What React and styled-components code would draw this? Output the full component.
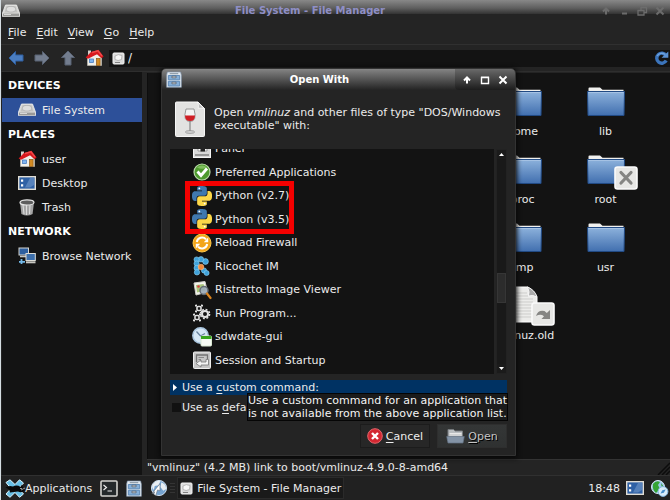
import React from "react";
import styled, { createGlobalStyle, css } from "styled-components";

const GlobalStyle = createGlobalStyle`
  *, *::before, *::after { box-sizing: border-box; }
  body { margin: 0; background: #131313; }
  body, button, input {
    font-family: "DejaVu Sans", Verdana, sans-serif;
    font-size: 11px;
    line-height: 13px;
    color: #ebebeb;
  }
  button { background: none; border: 0; padding: 0; margin: 0; text-align: left; white-space: nowrap; }
  ul { list-style: none; margin: 0; padding: 0; }
  h1, h2, p { margin: 0; font-size: 11px; }
  svg { display: block; flex: none; }
  u { text-underline-offset: 2px; }
`;

const Desktop = styled.div`
  position: relative;
  display: flex;
  flex-direction: column;
  min-height: 100vh;
  overflow: hidden;
  border-left: 1px solid #d5dde2;
  background: #242424;
`;

const TitleBar = styled.header`
  display: flex;
  align-items: center;
  flex: none;
  height: 21px;
  padding: 0 4px 0 1px;
  background: linear-gradient(#888, #5f5f5f 8px, #333 14px, #242424 14px);
`;

const WindowTitle = styled.h1`
  flex: 1;
  text-align: center;
  font-size: 10px;
  font-weight: bold;
  color: #8f8fc6;
`;

const WindowButtons = styled.div`
  display: flex;
  align-items: center;
  gap: 6px;
  color: ${(p) => (p.$active ? "#fff" : "#6c6c6c")};
  button { color: inherit; }
  ${(p) =>
    p.$active &&
    css`
      align-self: stretch;
      padding: 0 6px;
      background: rgba(0, 0, 0, 0.2);
      border-radius: 0 0 0 4px;
    `}
`;

const MenuBar = styled.nav`
  display: flex;
  align-items: center;
  gap: 10px;
  height: 24px;
  padding: 0 7px;
  border-bottom: 1px solid #303030;
`;

const ToolBar = styled.div`
  display: flex;
  align-items: center;
  gap: 8px;
  height: 27px;
  padding-left: 6px;
  border-bottom: 1px solid #2e2e2e;
`;

const PathBox = styled.label`
  display: flex;
  flex: 1;
  align-items: center;
  gap: 3px;
  height: 17px;
  padding: 0 1px 0 3px;
  margin-left: -3px;
  background: #131313;
  input { flex: 1; min-width: 0; border: 0; padding: 0; background: none; outline: 0; font-size: 12px; }
`;

const Body = styled.div`
  display: flex;
  flex: 1;
`;

const SideBar = styled.aside`
  width: 140px;
  padding-top: 1px;
  margin-left: 1px;
  background: #131313;
`;

const SideHeading = styled.h2`
  height: 25px;
  padding: 6px 6px 0;
  color: #fff;
`;

const SideItem = styled.button`
  display: flex;
  align-items: center;
  gap: 6px;
  width: 100%;
  height: 24px;
  padding-left: 16px;
  background: ${(p) => (p.$selected ? "#2d5099" : "none")};
`;

const MainPane = styled.main`
  display: flex;
  flex-direction: column;
  flex: 1;
  margin-left: 5px;
`;

const FileArea = styled.div`
  flex: 1;
  margin-top: 1px;
  padding: 9px 23px 0 0;
  background: #131313;
  border-left: 1px solid #0d0d0d;
`;

const FileGrid = styled.ul`
  display: grid;
  grid-template-columns: repeat(2, 83px);
  grid-auto-rows: 68px;
  justify-content: end;
`;

const FileItem = styled.li`
  display: flex;
  flex-direction: column;
  align-items: center;
`;

const FileIcon = styled.div`
  position: relative;
  height: 43px;
  padding-top: ${(p) => (p.$tall ? "0" : "4px")};
`;

const Emblem = styled.span`
  position: absolute;
  left: ${(p) => (p.$near ? "24px" : "28px")};
  top: 16px;
`;

const StatusBar = styled.footer`
  display: flex;
  justify-content: space-between;
  align-items: center;
  height: 16px;
  border-top: 1px solid #333;
  svg { align-self: flex-end; }
`;

const Panel = styled.footer`
  display: flex;
  align-items: center;
  height: 25px;
  padding: 0 1px 0 4px;
  gap: 2px;
  border-top: 1px solid #303030;
  background: #212121;
`;

const PanelGroup = styled.div`
  display: flex;
  align-items: center;
  gap: ${(p) => (p.$tray ? "6px" : "8px")};
  margin-left: ${(p) => (p.$tray ? "auto" : "0")};
`;

const PanelButton = styled.button`
  display: flex;
  align-items: center;
`;

const TaskButton = styled(PanelButton)`
  gap: 4px;
  height: 22px;
  padding: 0 2px;
  background: #1a1a1a;
  border: 1px solid #2a2a2a;
`;

const Dialog = styled.section`
  position: absolute;
  left: 160px;
  top: 68px;
  width: 355px;
  border: 1px solid #333;
  border-radius: 5px 5px 0 0;
  background: #242424;
  box-shadow: 0 1px 5px 1px #080808;
`;

const DialogBar = styled.header`
  display: flex;
  align-items: center;
  height: 21px;
  padding-left: 4px;
  border-radius: 4px 4px 0 0;
  background: linear-gradient(#848484, #4a4a4a 60%, #242424);
`;

const DialogTitle = styled.h1`
  flex: 1;
  padding-left: 2px;
  text-align: center;
  font-size: 10px;
  color: #fff;
`;

const DialogContent = styled.div`
  padding: 9px 8px 7px;
`;

const Intro = styled.div`
  display: flex;
  align-items: center;
  gap: 8px;
  height: 40px;
  padding-left: 4px;
`;

const ListFrame = styled.div`
  display: flex;
  gap: 2px;
  height: 225px;
  margin-top: 10px;
`;

const AppList = styled.ul`
  position: relative;
  display: flex;
  flex: 1;
  flex-direction: column;
  justify-content: flex-end;
  padding-bottom: 2px;
  overflow: hidden;
  background: #131313;
`;

const AppRows = styled.div`
  display: grid;
  grid-auto-rows: 1fr;
  flex: none;
  height: 235px;
`;

const AppRow = styled.li`
  display: flex;
  align-items: center;
  button { display: flex; align-items: center; gap: 3px; padding-left: 22px; }
`;

const Highlight = styled.div`
  position: absolute;
  left: 15px;
  top: 32px;
  width: 109px;
  height: 53px;
  border: 5px solid #f40000;
`;

const ScrollBar = styled.div`
  display: flex;
  flex-direction: column;
  align-items: center;
  width: 11px;
  background: #191919;
  border: 1px solid #222;
`;

const ScrollArrow = styled.button`
  display: grid;
  place-items: center;
  width: 9px;
  height: 9px;
  background: #1b1b1b;
`;

const ScrollTrack = styled.div`
  display: flex;
  flex: 1;
  align-self: stretch;
  flex-direction: column;
  padding-top: 114px;
`;

const ScrollThumb = styled.div`
  height: 30px;
  background: #2c2c2c;
  border: 1px solid #363636;
`;

const CustomCommand = styled.button`
  display: flex;
  align-items: center;
  gap: 2px;
  width: 100%;
  height: 15px;
  margin-top: 6px;
  padding-left: 3px;
  background: #003263;
`;

const DefaultOption = styled.label`
  display: flex;
  align-items: center;
  gap: 1px;
  height: 25px;
  padding-left: 2px;
  white-space: nowrap;
  input { appearance: none; width: 9px; height: 9px; margin: 0; background: #111; }
`;

const Tooltip = styled.div`
  position: absolute;
  left: 85px;
  top: 324px;
  width: max-content;
  border: 1px solid #050505;
  background: #1b1b1b;
  color: #f4f4f4;
  white-space: nowrap;
`;

const Actions = styled.div`
  display: flex;
  justify-content: flex-end;
  gap: 7px;
  margin-top: 4px;
`;

const ActionButton = styled.button`
  display: flex;
  align-items: center;
  justify-content: center;
  gap: 3px;
  width: 70px;
  height: 24px;
  border: 1px solid ${(p) => (p.disabled ? "#2e2e2e" : "#1c1c1c")};
  background: ${(p) => (p.disabled ? "linear-gradient(#343636, #2f3131)" : "#272727")};
  color: ${(p) => (p.disabled ? "#c4c4c4" : "#eee")};
  text-shadow: ${(p) => (p.disabled ? "1px 1px 0 #000" : "none")};
`;

const IconSlot = styled.span`
  display: grid;
  place-items: center;
  width: 18px;
`;

const controlShapes = {
  up: <path d="M6 9.5V4M3 6.5L6 3.5L9 6.5" />,
  min: <path d="M4 8.5H9" />,
  max: <path d="M2.5 3.5H9.500V9.500H2.500ZM2 3.200H10" strokeWidth="1.400" />,
  restore: <path d="M2 5.5H8V10H2ZM5 5V2.5H10.5V7.5H8" strokeWidth="1.3" />,
  close: <path d="M2.5 2.5L9.5 9.5M9.5 2.5L2.5 9.5" />,
};

const WinButton = ({ kind, label }) => (
  <button aria-label={label}>
    <svg width="12" height="12" viewBox="0 0 12 12" fill="none" stroke="currentColor" strokeWidth="2">
      {controlShapes[kind]}
    </svg>
  </button>
);

const Drive = () => (
  <svg width="18" height="14" viewBox="0 0 18 14">
    <path d="M3.5 1H14.5L17.5 9V12.5H.5V9Z" fill="#d8d8d6" stroke="#eee" strokeWidth=".8" />
    <path d="M4.5 2H13.5L15.5 8.5H2.5Z" fill="#c3c3c1" />
    <ellipse cx="9" cy="5.2" rx="4.6" ry="2.8" fill="#dedede" stroke="#aaa" strokeWidth=".6" />
    <path d="M1 9.6H17V12.4H1Z" fill="#9a9a98" />
    <path d="M2 10.5H9" stroke="#e8e8e8" strokeWidth=".8" />
  </svg>
);

const DriveFlat = () => (
  <svg width="13" height="13" viewBox="0 0 13 13">
    <rect x="1" y="1" width="11" height="11" rx="1" fill="#dadada" stroke="#f2f2f2" />
    <path d="M3 4Q6 1.5 10 3.5L9.500 7.500Q6 9.500 3 7.500Z" fill="#f6f6f6" stroke="#a8a8a8" strokeWidth=".8" />
    <path d="M3 10.500H8" stroke="#777" strokeWidth=".9" />
  </svg>
);

const Arrow = ({ kind }) => {
  const turn = { left: 0, right: 180, up: 90 }[kind];
  return (
    <svg width="18" height="18" viewBox="0 0 18 18">
      <path
        d="M2 9L8.5 2.5V6H16V12H8.5V15.5Z"
        transform={`rotate(${turn} 9 9)`}
        fill={kind === "left" ? "#4a7dc0" : "#737d8e"}
        stroke={kind === "left" ? "#2f5f9f" : "#596373"}
      />
    </svg>
  );
};

const Home = () => (
  <svg width="19" height="18" viewBox="0 0 19 18">
    <path d="M2.500 9L6 5L13 5L16.500 9V16.500H2.500Z" fill="#f1efe8" stroke="#c6c2b8" strokeWidth=".6" />
    <path d="M3 1.500H6V6H3Z" fill="#d6d2cc" />
    <path d="M.6 8.500L6 3L13.500 .8L18.600 7.500L16.500 9.300L12 5.300L3 9.800Z" fill="#d8181d" />
    <path d="M7 3.500L13 1.800L17 7" fill="none" stroke="#f04a4a" strokeWidth="1.400" />
    <rect x="4.500" y="10" width="4" height="3.600" fill="#7fb4ef" stroke="#3c73bb" strokeWidth=".7" />
    <rect x="11.500" y="9.500" width="3.600" height="7" fill="#d28a22" stroke="#8a5410" strokeWidth=".7" />
  </svg>
);

const Reload = () => (
  <svg width="15" height="15" viewBox="0 0 15 15">
    <path d="M12 4.5A5 5 0 1 0 12.2 9.5" fill="none" stroke="#3b74bb" strokeWidth="3.4" />
    <path d="M7.5 6.8H14.3V.5Z" fill="#5b92d4" />
    <path d="M11 3.6A5 5 0 0 0 3.2 5" fill="none" stroke="#6fa4e0" strokeWidth="1.4" />
  </svg>
);

const DesktopIcon = () => (
  <svg width="18" height="14" viewBox="0 0 18 14">
    <rect x=".7" y=".7" width="16.6" height="12.6" fill="#2f61a5" stroke="#e0ddd4" strokeWidth="1.4" />
    <path d="M7 11.5L12 2H16V9L12 11.5Z" fill="#6890c4" opacity=".7" />
    <path d="M3 3.6H5.200V5.800H3ZM3 8.200H5.200V10.400H3Z" fill="#fff" />
  </svg>
);

const TrashIcon = () => (
  <svg width="18" height="17" viewBox="0 0 18 17">
    <path d="M2 3L3.4 15Q9 18 14.6 15L16 3Z" fill="#a3a3a3" />
    <path d="M5 6L6 15M8.5 6V16M12 6L11.5 15" stroke="#dcdcdc" strokeWidth="1.1" />
    <ellipse cx="9" cy="3.4" rx="7" ry="2.6" fill="#5d5d5d" stroke="#e4e4e4" strokeWidth="1.2" />
  </svg>
);

const NetworkIcon = () => (
  <svg width="18" height="18" viewBox="0 0 18 18">
    <rect x="1" y="1" width="9.5" height="7" fill="#2d5f9f" stroke="#d4d4cf" />
    <path d="M2 9.5H10" stroke="#c7c7c2" strokeWidth="1.6" />
    <rect x="8" y="6.5" width="9.3" height="7" fill="#3d6fab" stroke="#deded8" />
    <path d="M8 15.3H17.5" stroke="#c7c7c2" strokeWidth="2" />
    <path d="M3.5 12V17M1 14.8H7" stroke="#74b9e8" strokeWidth="1.8" fill="none" />
  </svg>
);

const Folder = () => (
  <svg width="40" height="32" viewBox="0 0 40 32">
    <defs>
      <linearGradient id="folderFront" x2="0" y2="1">
        <stop stopColor="#8db2dc" />
        <stop offset="1" stopColor="#416faf" />
      </linearGradient>
    </defs>
    <path d="M2.5 8V2.5Q2.5 1.5 3.5 1.5H14L16.5 3.8H37.5V8Z" fill="#f0f0ee" />
    <path d="M1.5 5.5H38.5L38 29.5H2Z" fill="url(#folderFront)" stroke="#214a84" />
    <path d="M2.5 6.5H37.5" stroke="#a5c2e4" />
  </svg>
);

const FilePage = () => (
  <svg width="31" height="38" viewBox="0 0 31 38">
    <path d="M1 1H21Q25 3 30 11V36H1Z" fill="#ececea" stroke="#fff" />
    <path d="M3 7H20M3 10H21M3 13H26M3 16H26M3 19H26M3 22H26M3 25H26M3 28H26M3 31H26" stroke="#cdcdcb" />
    <path d="M20.5 1Q23 6 21.5 10Q26 8.5 30 11Q28 4 20.5 1Z" fill="#aaa" stroke="#f7f7f7" />
  </svg>
);

const EmblemIcon = ({ kind }) => (
  <svg width="24" height="24" viewBox="0 0 24 24">
    <rect x="1" y="1" width="22" height="22" rx="2.5" fill="#e7e7e5" stroke="#fafafa" strokeWidth="1.6" />
    {kind === "denied" ? (
      <path d="M7 6.5L17 17M17 6.5L7 17" stroke="#858583" strokeWidth="3.2" strokeLinecap="round" />
    ) : (
      <path d="M5 14Q7 7.5 13.5 9L15.8 11L19 8V17H10.5L13 14.2Q9.5 11.5 5 14Z" fill="#858583" />
    )}
  </svg>
);

const Cabinet = () => (
  <svg width="16" height="17" viewBox="0 0 17 17" preserveAspectRatio="none">
    <path d="M1.5 1H15.5L16.3 4V16.3H.7V4Z" fill="#e3eaf1" stroke="#8296ac" strokeWidth=".7" />
    <path d="M2.5 4.5H14.5V8.8H2.5ZM2.5 10.3H14.5V15H2.5Z" fill="#86afd8" stroke="#5e89b7" />
    <path d="M6.3 5.2H10.7V6.8H6.3ZM6.3 11.2H10.7V12.8H6.3Z" fill="#f4f4f4" stroke="#454d56" strokeWidth=".7" />
    <path d="M4 2.7H13" stroke="#7d8b99" />
  </svg>
);

const WineFile = () => (
  <svg width="32" height="37" viewBox="0 0 32 37">
    <path d="M1.5 2Q1.500 1 2.500 1H24L30.5 7.5V34.500Q30.500 35.500 29.500 35.500H2.500Q1.500 35.500 1.500 34.500Z" fill="#e2e2e1" stroke="#f6f6f6" />
    <path d="M23.5 1Q25 4 24.3 7.3Q28 6.5 30.5 8Z" fill="#bcbcbc" stroke="#fff" strokeWidth=".7" />
    <path d="M12 8H20Q23.5 20.5 16 20.5Q8.5 20.5 12 8Z" fill="#f2f2f2" stroke="#8d8d8d" strokeWidth=".9" />
    <path d="M11 14.5H21Q21 20 16 20Q11 20 11 14.5Z" fill="#cf1d24" />
    <path d="M16 20V30" stroke="#8d8d8d" strokeWidth="1.3" />
    <ellipse cx="16" cy="31" rx="4.6" ry="1.3" fill="#ddd" stroke="#888" strokeWidth=".8" />
  </svg>
);

const snake =
  "M14.25.18l.9.2.73.26.59.3.45.32.34.34.25.34.16.33.1.3.04.26.02.2-.01.13V8.5l-.05.63-.13.55-.21.46-.26.38-.3.31-.33.25-.35.19-.35.14-.33.1-.3.07-.26.04-.21.02H8.77l-.69.05-.59.14-.5.22-.41.27-.33.32-.27.35-.2.36-.15.37-.1.35-.07.32-.04.27-.02.21v3.06H3.17l-.21-.03-.28-.07-.32-.12-.35-.18-.36-.26-.36-.36-.35-.46-.32-.59-.28-.73-.21-.88-.14-1.05-.05-1.23.06-1.22.16-1.04.24-.87.32-.71.36-.57.4-.44.42-.33.42-.24.4-.16.36-.1.32-.05.24-.01h.16l.06.01h8.16v-.83H6.18l-.01-2.75-.02-.37.05-.34.11-.31.17-.28.25-.26.31-.23.38-.2.44-.18.51-.15.58-.12.64-.1.71-.06.77-.04.84-.02 1.27.05z";

const appDrawings = {
  panel: (
    <>
      <rect x="1.5" y="1.5" width="17" height="17" fill="#d9d9d9" stroke="#f5f5f5" />
      <path d="M6 3H15V12H6Z" fill="#fff" stroke="#999" />
      <path d="M8.500 9H13V12.500H8.500Z" fill="#222" />
      <path d="M3 16H17" stroke="#999" strokeWidth="2" />
    </>
  ),
  preferred: (
    <>
      <circle cx="10" cy="10" r="8" fill="#4e9a2e" stroke="#b9d8a8" strokeWidth="1.2" />
      <path d="M5 5.5A7 7 0 0 1 15 5.5Q10 8 5 5.5Z" fill="#7fbd5e" />
      <path d="M5.5 9.5L9 13.5L15 6.5" fill="none" stroke="#fff" strokeWidth="2.8" />
    </>
  ),
  python: (
    <g transform="scale(.8333)">
      <path d={snake} fill="#3f78ae" />
      <path d={snake} fill="#fcd748" transform="rotate(180 12 12)" />
      <circle cx="8.8" cy="2.9" r="1.1" fill="#fff" />
      <circle cx="15.2" cy="21.1" r="1.1" fill="#fff" />
    </g>
  ),
  reload: (
    <>
      <circle cx="10" cy="10" r="9" fill="#f3a519" stroke="#ffc94a" />
      <path d="M4.8 9A5.3 5.3 0 0 1 14 6.300M15.2 11A5.3 5.3 0 0 1 6 13.7" fill="none" stroke="#fff" strokeWidth="2" />
      <path d="M16.2 4.500V9.3H11.800ZM3.8 15.500V10.7H8.200Z" fill="#fff" />
    </>
  ),
  ricochet: (
    <>
      <g fill="#3fa2da" stroke="#8fd4f4" strokeWidth=".6">
        <circle cx="13.500" cy="5.500" r="2.900" />
        <circle cx="9" cy="3.300" r="2.700" />
        <circle cx="4.600" cy="3.500" r="2.600" />
        <circle cx="4.600" cy="7.500" r="2.600" />
        <circle cx="4.600" cy="12" r="2.600" />
        <circle cx="5" cy="16.300" r="2.700" />
        <circle cx="12" cy="14.500" r="2.600" />
        <circle cx="14.600" cy="17" r="2.500" />
      </g>
      <circle cx="9" cy="11" r="2.800" fill="#f18a3c" stroke="#ffc08a" strokeWidth=".6" />
    </>
  ),
  ristretto: (
    <>
      <path d="M2 3L13 1.5L15.5 12L4 15Z" fill="#f4f4ee" stroke="#d0d0c8" />
      <path d="M4 5L11.5 4L13.5 10.5L5 12.5Z" fill="#a7c47b" />
      <circle cx="6.500" cy="6.500" r="1.3" fill="#d84040" />
      <circle cx="12" cy="10.5" r="4" fill="#9aa9b8" fillOpacity=".9" stroke="#646c74" strokeWidth="1.5" />
      <path d="M15 13.5L18.5 18" stroke="#d9831e" strokeWidth="2.2" strokeLinecap="round" />
    </>
  ),
  run: (
    <g fill="none" stroke="#e2e2e2">
      <rect x="5" y="3.500" width="4" height="4" rx="1" strokeWidth="1.600" />
      <path d="M4.200 1.500V3.500M9.800 1.500V3.500M4.200 7.500V9.500M9.800 7.500V9.500M3 2.800H5M9 2.800H11M3 8.200H5M9 8.200H11" strokeWidth="1.400" />
      <rect x="3" y="12.500" width="4" height="4" rx="1" strokeWidth="1.600" />
      <path d="M2.200 10.500V12.500M7.800 10.500V12.500M2.200 16.500V18.500M7.800 16.500V18.500M1 11.800H3M7 11.800H9M1 17.200H3M7 17.200H9" strokeWidth="1.400" />
      <circle cx="13" cy="11" r="3" strokeWidth="2" />
      <circle cx="13" cy="11" r="4.600" strokeWidth="1.5" strokeDasharray="1.9 1.713" />
    </g>
  ),
  sdwdate: (
    <>
      <circle cx="8.5" cy="8.5" r="7.7" fill="#d5e7f5" stroke="#a9c5de" strokeWidth="1.5" />
      <path d="M4.5 4.5L8.5 9L13 6.5" fill="none" stroke="#67809c" strokeWidth="1.3" />
      <rect x="9" y="9" width="10.5" height="10" rx="1" fill="#f6faf3" stroke="#d9e8d1" />
      <path d="M9 9H19.5V12H9Z" fill="#37a61d" />
    </>
  ),
  session: (
    <>
      <rect x="1.5" y="2" width="17" height="16.5" rx="1" fill="#c6c6c6" stroke="#eee" />
      <path d="M4.500 12V5H15.500V9" fill="none" stroke="#737373" strokeWidth="1.300" />
      <path d="M6.500 7.500H12M6.500 9.500H9" stroke="#8a8a8a" />
      <path d="M4 13.500L9 10V12H14V9.500H16.500V15H9V17Z" fill="#f4f4f4" stroke="#777" strokeWidth=".8" />
    </>
  ),
};

const AppIcon = ({ name }) => (
  <svg width="20" height="20" viewBox="0 0 20 20">{appDrawings[name]}</svg>
);

const CancelIcon = () => (
  <svg width="16" height="16" viewBox="0 0 16 16">
    <circle cx="8" cy="8" r="7.3" fill="#d32731" stroke="#e4666c" />
    <path d="M5 5L11 11M11 5L5 11" stroke="#fff" strokeWidth="2.4" />
  </svg>
);

const OpenIcon = () => (
  <svg width="19" height="16" viewBox="0 0 19 16">
    <path d="M2 13V1.5H7.5L9 3H16.5V13Z" fill="#b9bdc0" stroke="#777b7e" />
    <path d="M3.5 5.5H15.5M3.5 7H15.5" stroke="#e8e8e8" />
    <path d="M.7 8.5H18.3L17 15H2Z" fill="#8393a6" stroke="#647284" strokeWidth=".7" />
  </svg>
);

const XfceMouse = () => (
  <svg width="20" height="19" viewBox="0 0 20 19">
    <path d="M1 3.5L5 .8L10 5.5L14.5 .8L18.5 4L13.5 9.5L18.5 15L14.5 18.3L10 13.5L5 18.3L1 15L6 9.5Z" fill="#67bfe6" stroke="#d9f3fc" />
    <path d="M.5 8.5Q4 6 8 7.5Q12 5.5 15.5 8L17 5.5L18 9L20 12Q16 14 13 12.5L5 13.5Q5 10 .5 8.5Z" fill="#080808" />
    <path d="M15 9.5H17M16 11L20 9" stroke="#bbb" strokeWidth=".8" />
  </svg>
);

const Terminal = () => (
  <svg width="18" height="17" viewBox="0 0 18 17">
    <rect x="1" y="1" width="16" height="15" rx="1" fill="#252a2c" stroke="#d3d3cf" strokeWidth="1.6" />
    <path d="M3.5 5L6.5 7.5L3.5 10M7.5 11H12" fill="none" stroke="#eee" strokeWidth="1.2" />
  </svg>
);

const Globe = () => (
  <svg width="18" height="18" viewBox="0 0 19 18">
    <circle cx="9.5" cy="9" r="8" fill="#75a3d0" stroke="#d3e1ef" />
    <path d="M3 5Q7 0 11 2L9 6L5 7L4 11Q1 8 3 5ZM12 3Q17 5 17 10L14 12L11 8Z" fill="#e9eef2" />
    <path d="M2 15L10.5 4.5V12L8 11L6 17L4 15.5L5 13Z" fill="#fff" stroke="#5d6975" strokeWidth=".6" />
  </svg>
);

const TorTray = () => (
  <svg width="19" height="17" viewBox="0 0 19 17">
    <circle cx="8" cy="7" r="6.5" fill="#9dc8ec" stroke="#d9ebf8" />
    <path d="M3 4Q6 0 10 2L8 5L10 9L6 13Q2 10 3 4Z" fill="#35a435" />
    <path d="M11 3L14 7L12 9Z" fill="#35a435" />
    <circle cx="13" cy="11.5" r="4.9" fill="#d9ecfa" stroke="#84b7df" />
    <path d="M10.5 13.5L12.3 10.3L15.7 9.5L13.8 12.8Z" fill="#468ecb" />
  </svg>
);

const Grip = () => (
  <svg width="13" height="13" viewBox="0 0 13 13">
    <path d="M1 13L13 1M5 13L13 5M9 13L13 9" stroke="#0c0c0c" strokeWidth="1.5" />
  </svg>
);

const Handle = () => (
  <svg width="5" height="12" viewBox="0 0 5 12">
    <path d="M0 1.5H5M0 4.5H5M0 7.5H5M0 10.5H5" stroke="#343434" />
  </svg>
);

const Tri = ({ d }) => (
  <svg width="7" height="9" viewBox="0 0 7 9"><path d={d} fill="#fff" /></svg>
);

const menus = ["File", "Edit", "View", "Go", "Help"];

const sideGroups = [
  { title: "DEVICES", items: [{ label: "File System", icon: <Drive />, selected: true }] },
  {
    title: "PLACES",
    items: [
      { label: "user", icon: <Home /> },
      { label: "Desktop", icon: <DesktopIcon /> },
      { label: "Trash", icon: <TrashIcon /> },
    ],
  },
  { title: "NETWORK", items: [{ label: "Browse Network", icon: <NetworkIcon /> }] },
];

const files = [
  { name: "home" },
  { name: "lib" },
  { name: "proc" },
  { name: "root", emblem: "denied" },
  { name: "tmp" },
  { name: "usr" },
  { name: "vmlinuz.old", page: true, emblem: "link" },
];

const apps = [
  ["Panel", "panel"],
  ["Preferred Applications", "preferred"],
  ["Python (v2.7)", "python"],
  ["Python (v3.5)", "python"],
  ["Reload Firewall", "reload"],
  ["Ricochet IM", "ricochet"],
  ["Ristretto Image Viewer", "ristretto"],
  ["Run Program...", "run"],
  ["sdwdate-gui", "sdwdate"],
  ["Session and Startup", "session"],
];

function OpenWithDialog() {
  return (
    <Dialog role="dialog" aria-labelledby="open-with-title">
      <DialogBar>
        <Cabinet />
        <DialogTitle id="open-with-title">Open With</DialogTitle>
        <WindowButtons $active>
          <WinButton kind="up" label="Shade" />
          <WinButton kind="max" label="Maximize" />
          <WinButton kind="close" label="Close" />
        </WindowButtons>
      </DialogBar>
      <DialogContent>
        <Intro>
          <WineFile />
          <p>
            Open <i>vmlinuz</i> and other files of type "DOS/Windows executable" with:
          </p>
        </Intro>
        <ListFrame>
          <AppList>
            <AppRows>
              {apps.map(([label, icon]) => (
                <AppRow key={label}>
                  <button><AppIcon name={icon} />{label}</button>
                </AppRow>
              ))}
            </AppRows>
            <Highlight />
          </AppList>
          <ScrollBar>
            <ScrollArrow aria-label="Scroll up"><Tri d="M1 6H6L3.5 3Z" /></ScrollArrow>
            <ScrollTrack><ScrollThumb /></ScrollTrack>
            <ScrollArrow aria-label="Scroll down"><Tri d="M1 3H6L3.5 6Z" /></ScrollArrow>
          </ScrollBar>
        </ListFrame>
        <CustomCommand>
          <Tri d="M0 1V8L4 4.5Z" />
          <span>Use a <u>c</u>ustom command:</span>
        </CustomCommand>
        <DefaultOption>
          <input type="checkbox" />
          <span>Use as <u>d</u>efault for this kind of file</span>
        </DefaultOption>
        <Actions>
          <ActionButton><CancelIcon /><span><u>C</u>ancel</span></ActionButton>
          <ActionButton disabled><OpenIcon /><span><u>O</u>pen</span></ActionButton>
        </Actions>
      </DialogContent>
      <Tooltip role="tooltip">
        Use a custom command for an application that<br />is not available from the above application list.
      </Tooltip>
    </Dialog>
  );
}

export default function App() {
  return (
    <>
      <GlobalStyle />
      <Desktop>
        <TitleBar>
          <Drive />
          <WindowTitle>File System - File Manager</WindowTitle>
          <WindowButtons>
            <WinButton kind="up" label="Shade" />
            <WinButton kind="min" label="Minimize" />
            <WinButton kind="restore" label="Restore" />
            <WinButton kind="close" label="Close" />
          </WindowButtons>
        </TitleBar>
        <MenuBar>
          {menus.map((m) => (
            <button key={m}><u>{m[0]}</u>{m.slice(1)}</button>
          ))}
        </MenuBar>
        <ToolBar>
          <button aria-label="Back"><Arrow kind="left" /></button>
          <button aria-label="Forward"><Arrow kind="right" /></button>
          <button aria-label="Up"><Arrow kind="up" /></button>
          <button aria-label="Home"><Home /></button>
          <PathBox>
            <DriveFlat />
            <input type="text" aria-label="Location" defaultValue="/" />
            <button aria-label="Reload"><Reload /></button>
          </PathBox>
        </ToolBar>
        <Body>
          <SideBar>
            {sideGroups.map((g) => (
              <div key={g.title}>
                <SideHeading>{g.title}</SideHeading>
                {g.items.map((i) => (
                  <SideItem key={i.label} $selected={i.selected}>
                    <IconSlot>{i.icon}</IconSlot>
                    {i.label}
                  </SideItem>
                ))}
              </div>
            ))}
          </SideBar>
          <MainPane>
            <FileArea>
              <FileGrid>
                {files.map((f) => (
                  <FileItem key={f.name}>
                    <FileIcon $tall={f.page}>
                      {f.page ? <FilePage /> : <Folder />}
                      {f.emblem && (
                        <Emblem $near={f.page}><EmblemIcon kind={f.emblem} /></Emblem>
                      )}
                    </FileIcon>
                    {f.name}
                  </FileItem>
                ))}
              </FileGrid>
            </FileArea>
            <StatusBar>
              <span>"vmlinuz" (4.2 MB) link to boot/vmlinuz-4.9.0-8-amd64</span>
              <Grip />
            </StatusBar>
          </MainPane>
        </Body>
        <Panel>
          <PanelGroup>
            <PanelButton><XfceMouse />Applications</PanelButton>
            <PanelButton aria-label="Terminal"><Terminal /></PanelButton>
            <PanelButton aria-label="Files"><Cabinet /></PanelButton>
            <PanelButton aria-label="Web Browser"><Globe /></PanelButton>
          </PanelGroup>
          <Handle />
          <TaskButton><DriveFlat />File System - File Manager</TaskButton>
          <PanelGroup $tray>
            <time>18:48</time>
            <PanelButton aria-label="Show Desktop"><DesktopIcon /></PanelButton>
            <PanelButton aria-label="Network Status"><TorTray /></PanelButton>
          </PanelGroup>
        </Panel>
        <OpenWithDialog />
      </Desktop>
    </>
  );
}
